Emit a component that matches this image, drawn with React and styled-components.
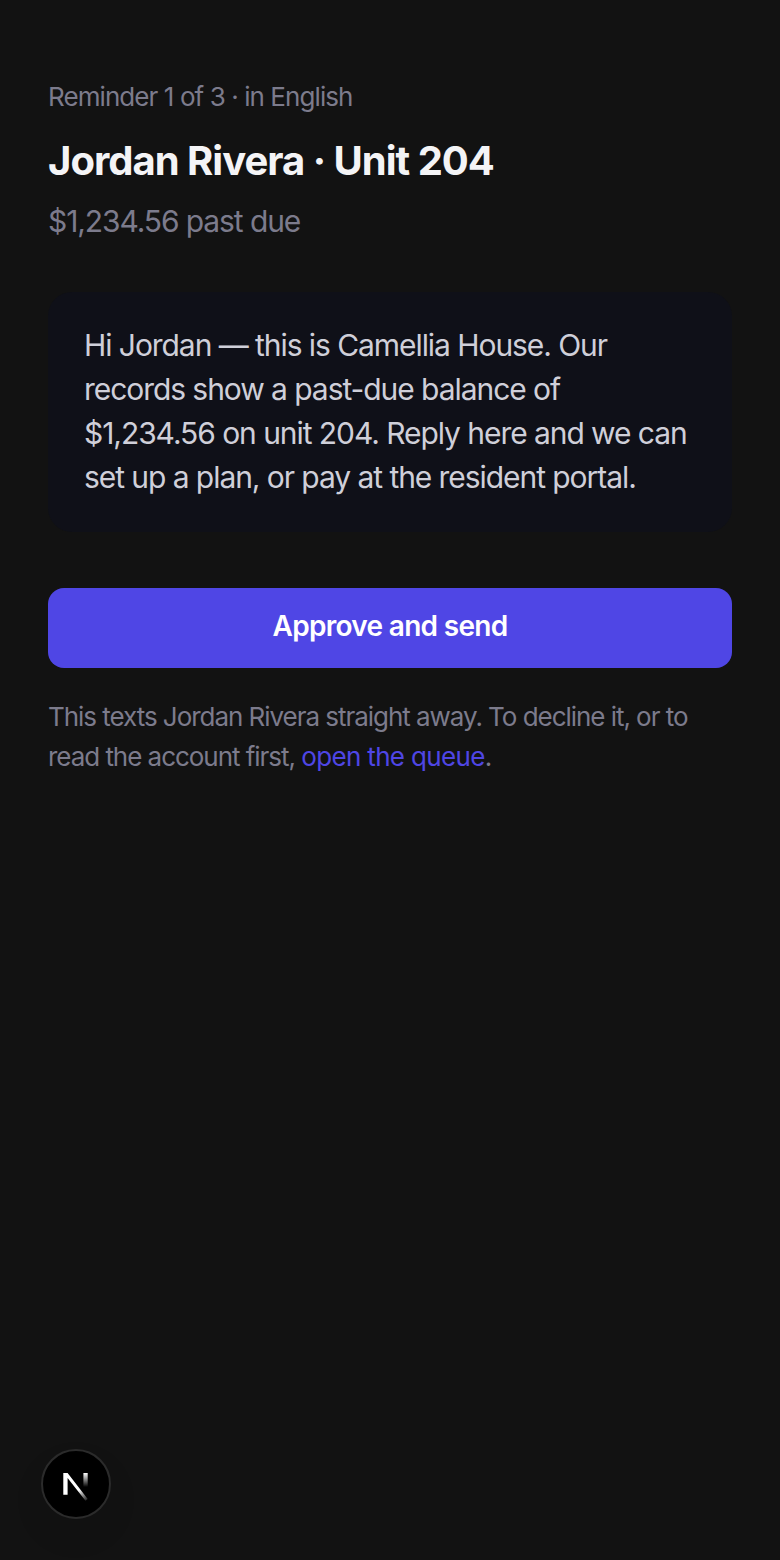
import React from 'react'
import { styled, createGlobalStyle } from 'styled-components'

const Global = createGlobalStyle`
  html, body { margin: 0; background: #121212; }
  body { font-family: Inter, "Liberation Sans", sans-serif; }
`

const Page = styled.main`
  min-height: 1560px;
  box-sizing: border-box;
  padding: 80px 48px 0;
  background: #121212;
  display: flex;
  flex-direction: column;
`

const Eyebrow = styled.p`
  margin: 0;
  font-size: 26px;
  line-height: 34px;
  letter-spacing: -0.92px;
  color: #7c7b8c;
`

const Title = styled.h1`
  margin: 23px 0 0;
  font-size: 40px;
  line-height: 48px;
  font-weight: 700;
  letter-spacing: -1px;
  color: #f4f4f6;
`

const Amount = styled.p`
  margin: 17px 0 0;
  font-size: 30px;
  line-height: 38px;
  letter-spacing: -1.1px;
  color: #7c7b8c;
`

const Message = styled.section`
  margin-top: 52px;
  padding: 31px 36px 33px;
  border-radius: 24px;
  background: #0f1018;
  font-size: 30px;
  line-height: 44px;
  letter-spacing: -1.06px;
  color: #cfcfd9;
`

const Approve = styled.button`
  margin-top: 56px;
  height: 80px;
  padding: 0 0 4px;
  border: 0;
  border-radius: 16px;
  background: #4f46e5;
  color: #ffffff;
  font-family: inherit;
  font-size: 28px;
  font-weight: 600;
  letter-spacing: -0.7px;
`

const Note = styled.p`
  margin: 29px 0 0;
  font-size: 26px;
  line-height: 40px;
  letter-spacing: -1.04px;
  color: #7c7b8c;
`

const QueueLink = styled.a`
  color: #4f46e5;
  letter-spacing: -0.65px;
  text-decoration: none;
`

const DevBadge = styled.div`
  position: fixed;
  left: 41px;
  bottom: 41px;
  width: 70px;
  height: 70px;
  box-sizing: border-box;
  border-radius: 50%;
  border: 2px solid #2b2b2b;
  background: #000000;
  box-shadow: 0 16px 32px rgba(0, 0, 0, 0.08);
  display: flex;
  align-items: center;
  justify-content: center;
`

const NextMark = () => (
  <svg width="28" height="36" viewBox="0 0 28 36" fill="none">
    <defs>
      <linearGradient id="nDiag" x1="8" y1="10" x2="26" y2="34" gradientUnits="userSpaceOnUse">
        <stop offset="0.55" stopColor="#fff" />
        <stop offset="1" stopColor="#fff" stopOpacity="0.1" />
      </linearGradient>
      <linearGradient id="nRight" x1="23" y1="7" x2="23" y2="21" gradientUnits="userSpaceOnUse">
        <stop offset="0" stopColor="#fff" />
        <stop offset="1" stopColor="#fff" stopOpacity="0" />
      </linearGradient>
    </defs>
    <path d="M1.3 7H5.6L25.7 33 23.5 34.8 5.6 12V28.7H1.3Z" fill="url(#nDiag)" />
    <rect x="21.4" y="7" width="4.3" height="14" fill="url(#nRight)" />
  </svg>
)

export default function App() {
  return (
    <>
      <Global />
      <Page>
        <Eyebrow>Reminder 1 of 3 · in English</Eyebrow>
        <Title>Jordan Rivera · Unit 204</Title>
        <Amount>$1,234.56 past due</Amount>
        <Message>
          Hi Jordan — this is Camellia House. Our records show a past-due balance of
          $1,234.56 on unit 204. Reply here and we can set up a plan, or pay at the
          resident portal.
        </Message>
        <Approve>Approve and send</Approve>
        <Note>
          This texts Jordan Rivera straight away. To decline it, or to read the account
          first, <QueueLink href="#">open the queue</QueueLink>.
        </Note>
      </Page>
      <DevBadge>
        <NextMark />
      </DevBadge>
    </>
  )
}
